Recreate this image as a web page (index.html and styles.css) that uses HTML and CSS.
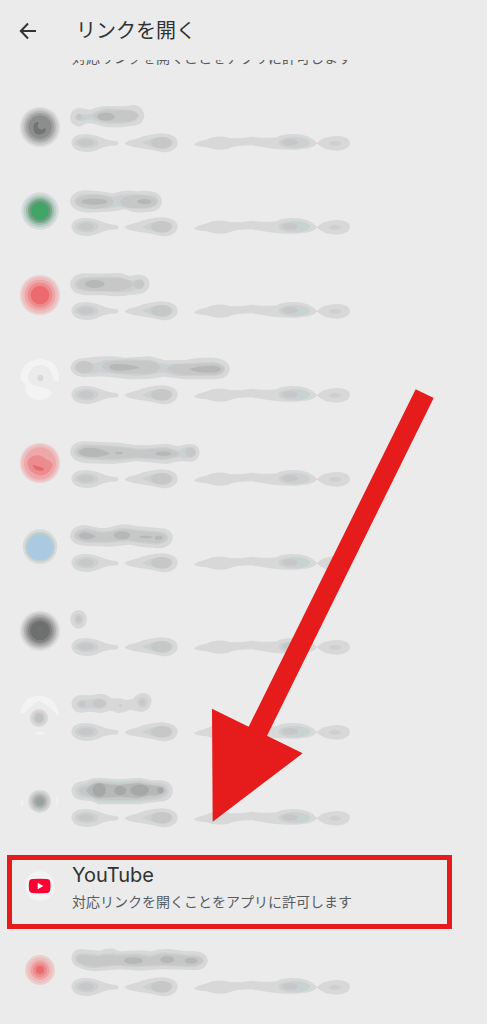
FILE: index.html
```html
<!DOCTYPE html>
<html lang="ja">
<head>
    <meta charset="UTF-8">
    <meta name="viewport" content="width=device-width, initial-scale=1">
    <title>リンクを開く</title>
    <link rel="stylesheet" href="styles.css">
</head>
<body>
    <!-- shared shape: blurred summary line -->
    <svg class="defs" width="0" height="0" aria-hidden="true">
        <symbol id="summary" viewBox="0 0 846 72">
            <g class="b1">
                <path d="M4 38Q6 12 50 12Q75 13 105 27Q125 33 143 34Q148 40 143 46Q120 46 100 52Q75 66 50 66Q8 64 4 38Z"/>
                <path d="M164 40Q170 31 200 26Q240 11 278 10Q322 14 323 38Q320 66 276 67Q245 58 205 53Q168 48 164 40Z"/>
                <path d="M372 42Q385 33 405 30Q440 14 475 23Q500 28 545 20Q580 26 620 22Q640 12 668 12Q720 12 742 40Q725 58 700 56Q680 62 610 56Q575 50 545 46Q500 46 475 56Q440 64 410 52Q375 50 372 42Z"/>
                <path d="M740 40Q755 20 800 18Q838 18 840 38Q838 60 800 62Q760 62 740 40Z"/>
            </g>
            <g class="b2">
                <ellipse cx="50" cy="38" rx="35" ry="17"/>
                <path d="M216 38Q240 24 278 20Q308 22 309 38Q306 56 278 57Q240 52 216 38Z"/>
                <ellipse cx="673" cy="38" rx="47" ry="17"/>
                <ellipse cx="795" cy="40" rx="18" ry="7"/>
            </g>
            <g class="b3">
                <ellipse cx="48" cy="38" rx="23" ry="11"/>
                <ellipse cx="274" cy="38" rx="31" ry="17"/>
                <ellipse cx="660" cy="37" rx="24" ry="10"/>
            </g>
        </symbol>
    </svg>

    <header class="toolbar">
        <button class="back" type="button" aria-label="戻る">
            <svg viewBox="0 0 24 24" width="24" height="24"><path d="M20 12H5M12 4.500L4.800 12L12 19.500"/></svg>
        </button>
        <h1>リンクを開く</h1>
    </header>

    <main class="screen">
        <ul class="apps">
            <li><a class="app" href="#">
                <span class="icon"></span>
                <span class="info"><span class="name"></span><span class="desc">対応リンクを開くことをアプリに許可します</span></span>
            </a></li>

            <li><a class="app" href="#" aria-label="アプリ 1">
                <svg class="icon" viewBox="0 0 120 120">
                    <circle cx="60" cy="60" r="60" fill="#d9dad9"/><circle cx="60" cy="60" r="54" fill="#c8c9c8"/><circle cx="60" cy="60" r="48" fill="#b5b7b6"/><circle cx="60" cy="60" r="42" fill="#a0a2a1"/><circle cx="60" cy="60" r="35" fill="#8c8e8d"/>
                    <path d="M42 51Q37 66 45 78Q60 88 75 76Q80 66 74 62Q65 73 56 64Q50 55 57 47Q49 42 42 51Z" fill="#707472"/>
                </svg>
                <span class="info">
                    <svg class="blur-name" viewBox="0 0 480 90">
                        <path class="b1" d="M0 52Q2 26 28 24Q45 24 60 30Q85 18 115 18Q150 20 195 15Q222 22 223 48Q220 78 180 78Q120 88 85 76Q60 66 45 72Q36 80 26 80Q2 76 0 52Z"/>
                        <path class="b2" d="M14 52Q20 36 35 42Q60 48 80 34Q110 20 140 28Q200 24 207 46Q204 64 180 68Q120 76 85 66Q60 54 40 62Q16 66 14 52Z"/>
                        <path class="b3" d="M68 49Q95 26 135 32Q200 26 205 46Q198 66 160 66Q95 72 68 49Z"/>
                        <circle class="b3" cx="28" cy="51" r="9"/>
                        <ellipse class="b4" cx="108" cy="50" rx="26" ry="12"/>
                    </svg>
                    <svg class="blur-desc"><use href="#summary"/></svg>
                </span>
            </a></li>

            <li><a class="app" href="#" aria-label="アプリ 2">
                <svg class="icon" viewBox="0 0 120 120">
                    <circle cx="60" cy="60" r="56" fill="#d4dbdc"/><circle cx="60" cy="60" r="49" fill="#c0cbcb"/><circle cx="60" cy="60" r="42" fill="#8fc4a4"/><circle cx="60" cy="60" r="36" fill="#7fa48d"/><circle cx="60" cy="60" r="31" fill="#6f9a7e"/><circle cx="60" cy="60" r="26" fill="#41a568"/>
                </svg>
                <span class="info">
                    <svg class="blur-name" viewBox="0 0 480 90">
                        <path class="b1" d="M0 52Q4 22 45 19Q90 20 130 28Q165 15 200 22Q272 14 276 52Q272 86 230 84Q195 90 165 76Q120 86 50 86Q4 82 0 52Z"/>
                        <path class="b2" d="M12 52Q18 30 50 29Q90 28 130 38Q165 26 220 32Q264 30 266 53Q260 74 215 74Q165 74 145 66Q110 78 50 74Q15 72 12 52Z"/>
                        <ellipse class="b3" cx="74" cy="53" rx="56" ry="21"/>
                        <ellipse class="b3" cx="206" cy="53" rx="55" ry="20"/>
                        <ellipse class="b4" cx="73" cy="53" rx="39" ry="9"/>
                        <ellipse class="b4" cx="223" cy="53" rx="21" ry="8"/>
                    </svg>
                    <svg class="blur-desc"><use href="#summary"/></svg>
                </span>
            </a></li>

            <li><a class="app" href="#" aria-label="アプリ 3">
                <svg class="icon" viewBox="0 0 120 120">
                    <circle cx="60" cy="60" r="60" fill="#edcfcf"/><circle cx="60" cy="60" r="54" fill="#eebdbd"/><circle cx="60" cy="60" r="46" fill="#eda5a6"/><circle cx="60" cy="60" r="37" fill="#ec8c8e"/><circle cx="60" cy="60" r="28" fill="#eb6b6e"/>
                </svg>
                <span class="info">
                    <svg class="blur-name" viewBox="0 0 480 90">
                        <path class="b1" d="M0 49Q4 17 45 16Q100 17 150 15L180 24Q236 10 239 48Q236 82 180 80Q150 88 100 82L50 82Q4 80 0 49Z"/>
                        <path class="b2" d="M12 49Q18 25 60 26Q110 24 150 27L175 36Q200 38 212 33Q226 40 224 52Q216 64 200 62Q180 76 120 72L50 70Q16 68 12 49Z"/>
                        <path class="b3" d="M20 49Q28 30 60 30L150 30Q185 38 192 48Q185 64 145 70L60 68Q26 66 20 49Z"/>
                        <ellipse class="b3" cx="207" cy="49" rx="15" ry="14"/>
                        <ellipse class="b4" cx="74" cy="48" rx="30" ry="12"/>
                    </svg>
                    <svg class="blur-desc"><use href="#summary"/></svg>
                </span>
            </a></li>

            <li><a class="app" href="#" aria-label="アプリ 4">
                <svg class="icon" viewBox="0 0 120 120">
                    <path d="M1 55Q5 3 62 0Q112 5 117 50V66H100Q95 20 65 17Q28 20 23 55Q25 78 60 84Q90 88 96 103Q88 122 60 123Q20 122 16 90Q20 75 8 68Q0 65 1 55Z" fill="#f3f3f3"/>
                    <circle cx="61" cy="57" r="9" fill="#d8d8d8"/>
                </svg>
                <span class="info">
                    <svg class="blur-name" viewBox="0 0 480 90">
                        <path class="b1" d="M1 46Q6 19 45 18Q110 8 165 17L240 13L285 25L345 24Q400 14 440 18Q476 24 480 51Q476 80 440 82H345L280 74Q220 86 160 80Q100 70 40 76Q4 72 1 46Z"/>
                        <path class="b2" d="M12 46Q20 26 55 30Q80 38 105 24L180 22L245 24Q265 34 290 36L430 30Q464 34 466 52Q462 72 430 72H320L280 60Q230 74 170 70L90 60Q60 68 35 65Q14 60 12 46Z"/>
                        <ellipse class="b3" cx="43" cy="45" rx="27" ry="18"/>
                        <path class="b3" d="M95 44Q105 26 140 26H235Q265 30 272 46Q260 66 225 66L150 64Q105 58 95 44Z"/>
                        <path class="b3" d="M290 50Q305 34 340 37L430 34Q462 38 463 52Q460 68 430 69L340 68Q300 64 290 50Z"/>
                        <path class="b4" d="M117 45Q125 32 150 36Q190 37 210 48Q180 56 150 56Q122 56 117 45Z"/>
                        <path class="b4" d="M357 51Q380 42 430 41Q452 43 453 52Q450 63 425 62Q380 64 357 51Z"/>
                    </svg>
                    <svg class="blur-desc"><use href="#summary"/></svg>
                </span>
            </a></li>

            <li><a class="app" href="#" aria-label="アプリ 5">
                <svg class="icon" viewBox="0 0 120 120">
                    <circle cx="60" cy="60" r="60" fill="#edcfcf"/><circle cx="60" cy="60" r="55" fill="#eebdbd"/><circle cx="60" cy="61" r="48" fill="#eda8a9"/>
                    <path d="M22 60Q25 38 55 36Q70 40 80 50Q100 55 97 72Q85 98 60 98Q25 92 22 60Z" fill="#ec8c8e"/>
                    <path d="M38 65L62 73L74 77Q68 88 52 82Q40 78 38 65Z" fill="#e66a6d"/>
                </svg>
                <span class="info">
                    <svg class="blur-name" viewBox="0 0 480 90">
                        <path class="b1" d="M0 48Q4 16 45 16L150 20Q200 30 240 27L290 23L325 31Q386 10 389 49Q386 84 345 76Q320 74 290 84L200 76L130 84L50 82Q4 78 0 48Z"/>
                        <path class="b2" d="M10 48Q18 24 50 25L150 30L210 38L290 33L325 44Q350 25 373 40Q386 52 370 62Q350 70 330 62L290 72L200 68L130 74L50 70Q14 66 10 48Z"/>
                        <path class="b3" d="M18 48Q28 28 60 29L150 34L210 42L290 37Q320 42 330 54Q315 68 280 68L200 64L130 69L60 67Q22 64 18 48Z"/>
                        <circle class="b3" cx="362" cy="49" r="15"/>
                        <path class="b4" d="M26 48Q35 32 70 36Q110 42 121 53Q95 64 60 63Q28 60 26 48Z"/>
                        <ellipse class="b4" cx="147" cy="51" rx="12" ry="4"/>
                        <ellipse class="b4" cx="280" cy="53" rx="24" ry="7"/>
                    </svg>
                    <svg class="blur-desc"><use href="#summary"/></svg>
                </span>
            </a></li>

            <li><a class="app" href="#" aria-label="アプリ 6">
                <svg class="icon" viewBox="0 0 120 120">
                    <circle cx="60" cy="59" r="52" fill="#d6dcdb"/><circle cx="60" cy="60" r="45" fill="#c4cdcc"/><circle cx="60" cy="61" r="39" fill="#a9cae0"/>
                </svg>
                <span class="info">
                    <svg class="blur-name" viewBox="0 0 480 90">
                        <path class="b1" d="M0 48Q4 16 45 15L90 24Q120 25 135 17Q165 8 195 17L265 24Q304 24 309 51Q304 84 265 85L210 80L180 74L120 80L50 78Q4 76 0 48Z"/>
                        <path class="b2" d="M10 46Q20 24 50 25L95 34Q120 35 140 27Q165 20 190 28L265 34Q292 36 296 52Q292 72 260 74L205 68L170 64L110 70L45 68Q14 64 10 46Z"/>
                        <path class="b3" d="M14 46Q25 30 50 30L95 38Q120 40 140 31Q165 24 190 32L265 38Q288 40 291 52Q286 68 260 70L205 65L170 60L110 66L45 64Q18 60 14 46Z"/>
                        <path class="b4" d="M26 46Q35 34 52 38Q70 42 78 49Q65 60 45 58Q28 56 26 46Z"/>
                        <ellipse class="b4" cx="156" cy="46" rx="25" ry="12"/>
                        <ellipse class="b4" cx="228" cy="51" rx="20" ry="4"/>
                        <ellipse class="b4" cx="266" cy="53" rx="12" ry="6"/>
                    </svg>
                    <svg class="blur-desc"><use href="#summary"/></svg>
                </span>
            </a></li>

            <li><a class="app" href="#" aria-label="アプリ 7">
                <svg class="icon" viewBox="0 0 120 120">
                    <circle cx="60" cy="59" r="60" fill="#dadbda"/><circle cx="60" cy="59" r="54" fill="#c6c7c6"/><circle cx="60" cy="59" r="48" fill="#afb0af"/><circle cx="60" cy="59" r="42" fill="#989a99"/><circle cx="60" cy="59" r="36" fill="#828483"/><circle cx="60" cy="59" r="29" fill="#6d706e"/>
                </svg>
                <span class="info">
                    <svg class="blur-name" viewBox="0 0 480 90">
                        <ellipse class="b1" cx="26" cy="46" rx="25" ry="28"/><ellipse class="b2" cx="26" cy="46" rx="14" ry="17"/><ellipse class="b3" cx="26" cy="46" rx="8" ry="10"/>
                    </svg>
                    <svg class="blur-desc"><use href="#summary"/></svg>
                </span>
            </a></li>

            <li><a class="app tall" href="#" aria-label="アプリ 8">
                <svg class="icon" viewBox="0 0 120 120">
                    <path d="M1 56Q5 0 60 0Q112 2 117 62Q90 30 58 14Q30 30 14 50Q4 50 1 56Z" fill="#f3f3f3"/>
                    <ellipse cx="60" cy="112" rx="14" ry="4" fill="#f3f3f3"/>
                    <circle cx="57" cy="66" r="27" fill="#d8d8d8"/><path d="M43 47Q58 36 74 47Q58 53 43 47Z" fill="#e8cfcf"/><circle cx="57" cy="66" r="20" fill="#cdd1d2"/><circle cx="57" cy="66" r="14" fill="#c2c2c2"/>
                </svg>
                <span class="info">
                    <svg class="blur-name" viewBox="0 0 480 90">
                        <path class="b1" d="M4 44Q8 16 38 18Q60 20 88 15Q112 14 125 29Q145 26 165 32Q188 34 194 24Q205 10 225 12Q245 18 245 38Q240 64 215 69Q195 66 180 62Q160 74 142 72Q125 64 115 66Q95 76 75 70Q55 66 38 71Q8 72 4 44Z"/>
                        <path class="b2" d="M20 44Q26 30 45 33Q65 30 85 28Q108 30 112 44Q108 60 85 60Q65 56 40 60Q22 58 20 44Z"/>
                        <circle class="b2" cx="217" cy="40" r="16"/><circle class="b2" cx="151" cy="50" r="5"/>
                        <circle class="b3" cx="36" cy="45" r="10"/><ellipse class="b3" cx="88" cy="43" rx="19" ry="12"/><circle class="b3" cx="217" cy="40" r="8"/>
                    </svg>
                    <svg class="blur-desc"><use href="#summary"/></svg>
                </span>
            </a></li>

            <li><a class="app tall" href="#" aria-label="アプリ 9">
                <svg class="icon" viewBox="0 0 120 120">
                    <path d="M7 48Q11 62 7 77Q-2 62 7 48ZM107 36Q122 56 107 80Q113 58 107 36Z" fill="#f3f3f3"/>
                    <circle cx="59" cy="58" r="34" fill="#d5d6d5"/><circle cx="59" cy="58" r="28" fill="#c4c8c7"/><circle cx="59" cy="58" r="22" fill="#b3b6b4"/><circle cx="59" cy="58" r="16" fill="#a3a6a4"/><circle cx="60" cy="60" r="9" fill="#95a39a"/>
                </svg>
                <span class="info">
                    <svg class="blur-name" viewBox="0 0 480 90">
                        <path class="b1" d="M4 46Q8 18 45 18Q65 7 90 8L145 13L210 8L245 16Q306 8 309 48Q304 82 265 80L210 88L85 88Q65 76 35 76Q6 74 4 46Z"/>
                        <path class="b2" d="M16 46Q20 28 50 26Q65 14 90 15L145 20L210 15L250 23Q294 20 297 48Q292 72 260 74L210 80L85 80Q65 68 40 68Q18 64 16 46Z"/>
                        <path class="b3" d="M26 46Q32 34 55 32Q70 20 90 20L145 26L210 20L250 29Q288 26 291 48Q286 66 255 68L210 75L85 75Q65 64 48 62Q28 60 26 46Z"/>
                        <path class="b4" d="M48 46Q65 22 90 24Q120 30 145 30L205 24Q230 30 260 33Q282 34 284 47Q276 64 240 61L205 70L150 65L85 70Q56 64 48 46Z"/>
                        <circle class="b5" cx="88" cy="45" r="20"/><ellipse class="b5" cx="151" cy="47" rx="18" ry="14"/><ellipse class="b5" cx="209" cy="46" rx="28" ry="17"/><circle class="b5" cx="271" cy="46" r="9"/>
                    </svg>
                    <svg class="blur-desc"><use href="#summary"/></svg>
                </span>
            </a></li>

            <li class="highlight"><a class="app" href="#">
                <svg class="icon" viewBox="0 0 120 120">
                    <circle cx="60" cy="57" r="44" fill="#f3f3f3"/>
                    <path d="M38 36Q59 34 80 36Q90 36 91 46Q92 57 91 68Q90 77 80 78Q59 80 38 78Q28 77 27 68Q26 57 27 46Q28 36 38 36Z" fill="#ff0033"/>
                    <path d="M53 47L70 57L53 67Z" fill="#fff"/>
                </svg>
                <span class="info"><span class="name">YouTube</span><span class="desc">対応リンクを開くことをアプリに許可します</span></span>
            </a></li>

            <li><a class="app" href="#" aria-label="アプリ 10">
                <svg class="icon" viewBox="0 0 120 120">
                    <circle cx="60" cy="57" r="45" fill="#edcfcf"/><circle cx="60" cy="57" r="38" fill="#eebdbd"/><circle cx="60" cy="57" r="29" fill="#eda3a4"/><circle cx="60" cy="57" r="21" fill="#ec8a8c"/><circle cx="60" cy="57" r="12" fill="#eb6b6e"/>
                </svg>
                <span class="info">
                    <svg class="blur-name" viewBox="0 0 480 90">
                        <path class="b1" d="M4 42Q6 18 30 15L90 20Q105 12 130 14L150 22L210 19L245 22Q265 14 300 15L345 22Q410 16 414 50Q408 80 370 78L280 76L210 80L150 76L75 82Q45 80 25 70Q6 64 4 42Z"/>
                        <path class="b2" d="M14 42Q18 26 40 28L90 32Q115 22 140 30L200 28L240 34Q270 22 300 26L350 32Q398 30 403 50Q396 68 360 70L280 66L200 70L140 66L75 72Q45 72 30 62Q14 58 14 42Z"/>
                        <path class="b3" d="M20 42Q26 30 45 33L90 37Q115 28 140 36L200 33L240 40Q270 28 300 31L350 37Q392 34 399 50Q390 64 360 66L280 62L200 66L140 62L75 68Q45 66 34 58Q20 54 20 42Z"/>
                        <ellipse class="b4" cx="190" cy="50" rx="28" ry="10"/><ellipse class="b4" cx="292" cy="47" rx="21" ry="11"/><ellipse class="b4" cx="363" cy="50" rx="19" ry="9"/>
                    </svg>
                    <svg class="blur-desc"><use href="#summary"/></svg>
                </span>
            </a></li>
        </ul>

        <!-- arrow pointing at the YouTube row -->
        <svg class="pointer" viewBox="66 57 666 1299" aria-hidden="true">
            <path d="M677 58L731 84L231 1097L338 1150L68 1355L66 1016L176 1070Z"/>
        </svg>
    </main>
</body>
</html>
```
FILE: styles.css
```css
* {
    box-sizing: border-box;
}
body {
    margin: 0;
    min-height: 100vh;
    background-color: #ebebeb;
    color: #303333;
    font-family: Inter, "Noto Sans CJK JP", sans-serif;
}
.defs {
    position: absolute;
}
.toolbar {
    display: flex;
    align-items: center;
    gap: 36px;
    height: 60px;
    padding: 2px 16px 0;
}
.toolbar h1 {
    margin: 0;
    font-size: 20px;
    font-weight: 400;
    line-height: 28px;
}
.back {
    display: flex;
    padding: 0;
    border: none;
    background: none;
    cursor: pointer;
}
.back path {
    fill: none;
    stroke: #303333;
    stroke-width: 2;
}
.screen {
    position: relative;
    overflow: hidden;
}
/* list is scrolled, so the first row is cut by the toolbar */
.apps {
    list-style: none;
    margin: -59px 0 0;
    padding: 0 0 11px;
}
.app {
    display: flex;
    align-items: center;
    gap: 10px;
    height: 84px;
    padding: 0 20px;
    color: inherit;
    text-decoration: none;
}
.app.tall {
    height: 86px;
}
.icon {
    flex: none;
    width: 40px;
    height: 40px;
    overflow: visible;
}
.info {
    display: flex;
    flex-direction: column;
}
.name,
.desc {
    padding-left: 2px;
    white-space: nowrap;
}
.name {
    height: 30px;
    font-size: 20px;
    line-height: 30px;
}
.desc {
    color: #585c5c;
    font-size: 14px;
    line-height: 24px;
}
.blur-name {
    width: 160px;
    height: 30px;
}
.blur-desc {
    width: 282px;
    height: 24px;
}
.b1 {
    fill: #d8d8d8;
}
.b2 {
    fill: #c9d1d3;
}
.b3 {
    fill: #c7c7c7;
}
.b4 {
    fill: #b6b8b7;
}
.b5 {
    fill: #a5a8a6;
}
.highlight {
    position: relative;
}
.highlight::after {
    content: "";
    position: absolute;
    inset: 10px 35px 0 7px;
    border: 5px solid #e61c1c;
    pointer-events: none;
}
.pointer {
    position: absolute;
    top: 329px;
    left: 212px;
    width: 222px;
    height: 433px;
    fill: #e61c1c;
    pointer-events: none;
}
```
